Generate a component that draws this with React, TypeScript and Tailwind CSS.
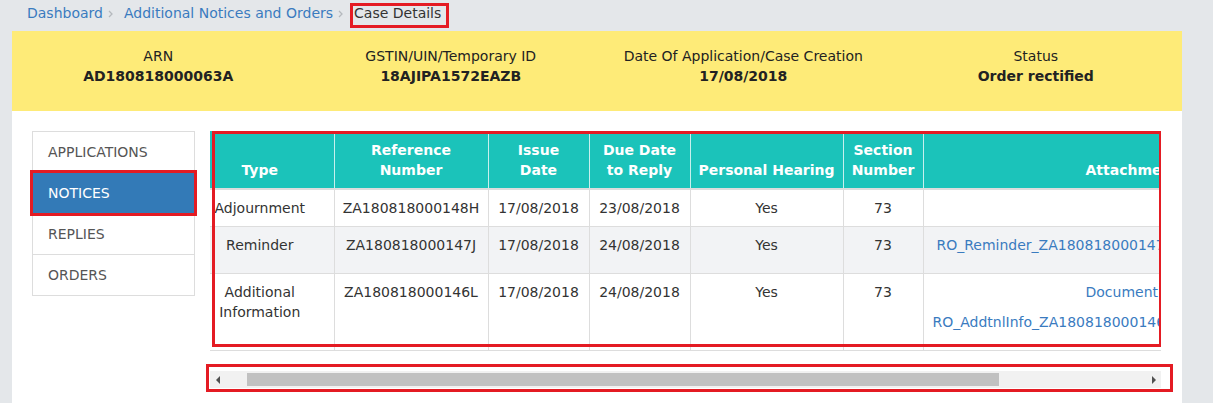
const rows = [
  { type: ["Adjournment"], ref: "ZA180818000148H", issue: "17/08/2018", due: "23/08/2018", hearing: "Yes", section: "73", files: [] as { label: string; pl: string }[] },
  {
    type: ["Reminder"],
    ref: "ZA180818000147J",
    issue: "17/08/2018",
    due: "24/08/2018",
    hearing: "Yes",
    section: "73",
    files: [{ label: "RO_Reminder_ZA180818000147J.pdf", pl: "pl-[13px]" }],
  },
  {
    type: ["Additional", "Information"],
    ref: "ZA180818000146L",
    issue: "17/08/2018",
    due: "24/08/2018",
    hearing: "Yes",
    section: "73",
    files: [
      { label: "Document", pl: "pl-[162px]" },
      { label: "RO_AddtnlInfo_ZA180818000146L.pdf", pl: "pl-[9px]" },
    ],
  },
]

const menu = ["APPLICATIONS", "NOTICES", "REPLIES", "ORDERS"]

function Crumb({ label }: { label: string }) {
  return (
    <>
      <a className="text-[#3a7bbf]">{label}</a>
      <svg width="6" height="8" viewBox="0 0 6 8" className="ml-[5px] mr-[10px] mt-[7px]">
        <path d="M1 1l3 3-3 3" fill="none" stroke="#b5b9bd" strokeWidth="1.3" />
      </svg>
    </>
  )
}

export default function App() {
  return (
    <div className="min-h-[403px] bg-[#e4e7ea] font-['DejaVu_Sans',sans-serif] text-[14px] leading-[20px] text-[#333]">
      <div className="flex h-[31px] items-start pl-[27px] pt-[3px]">
        <Crumb label="Dashboard" />
        <Crumb label="Additional Notices and Orders" />
        <span className="relative text-[#333]">
          Case Details
          <span className="absolute -left-[4px] -right-[8px] top-0 -bottom-[5px] border-[3px] border-[#e41b23]" />
        </span>
      </div>

      <div className="ml-[12px] min-h-[372px] w-[1170px] bg-white">
        <div className="grid h-[80px] grid-cols-4 bg-[#feeb78] pt-[15px] text-center text-[#222]">
          <div>
            <div>ARN</div>
            <div className="font-bold">AD180818000063A</div>
          </div>
          <div>
            <div>GSTIN/UIN/Temporary ID</div>
            <div className="font-bold">18AJIPA1572EAZB</div>
          </div>
          <div>
            <div>Date Of Application/Case Creation</div>
            <div className="font-bold">17/08/2018</div>
          </div>
          <div>
            <div>Status</div>
            <div className="font-bold">Order rectified</div>
          </div>
        </div>

        <div className="flex gap-[15px] pl-[20px] pt-[20px]">
          <ul className="h-fit w-[163px] border-x border-t border-[#ddd]">
            {menu.map((m) => (
              <li
                key={m}
                className={
                  m === "NOTICES"
                    ? "relative border-b border-[#ddd] bg-[#337ab7] px-[15px] py-[10px] text-white"
                    : "border-b border-[#ddd] px-[15px] py-[10px] text-[#555]"
                }
              >
                {m}
                {m === "NOTICES" && <span className="absolute -inset-[3px] border-[3px] border-[#e41b23]" />}
              </li>
            ))}
          </ul>

          <div className="w-[951px]">
            <div className="relative overflow-hidden">
              <table className="w-[1240px] table-fixed border-collapse">
                <colgroup>
                  <col className="w-[124px]" />
                  <col className="w-[154px]" />
                  <col className="w-[101px]" />
                  <col className="w-[101px]" />
                  <col className="w-[153px]" />
                  <col className="w-[80px]" />
                  <col className="w-[527px]" />
                </colgroup>
                <thead>
                  <tr className="border-b-2 border-[#ddd] bg-[#1bc3ba] align-bottom font-bold text-white">
                    <th className="pl-[4px] pr-[28px] pb-[8px] pt-[9px]">Type</th>
                    <th className="border-l border-[#c8f0ed] px-[8px] pb-[8px] pt-[9px]">
                      Reference
                      <br />
                      Number
                    </th>
                    <th className="border-l border-[#c8f0ed] px-[8px] pb-[8px] pt-[9px]">
                      Issue
                      <br />
                      Date
                    </th>
                    <th className="border-l border-[#c8f0ed] px-[8px] pb-[8px] pt-[9px]">
                      Due Date
                      <br />
                      to Reply
                    </th>
                    <th className="whitespace-nowrap border-l border-[#c8f0ed] px-[4px] pb-[8px] pt-[9px]">Personal Hearing</th>
                    <th className="border-l border-[#c8f0ed] px-[4px] pb-[8px] pt-[9px]">
                      Section
                      <br />
                      Number
                    </th>
                    <th className="border-l border-[#c8f0ed] pb-[8px] pl-[162px] pt-[9px] text-left">Attachments</th>
                  </tr>
                </thead>
                <tbody>
                  {rows.map((r, i) => (
                    <tr key={r.ref} className={i === 1 ? "border-b border-[#ddd] bg-[#f2f3f5] align-top" : "border-b border-[#ddd] align-top"}>
                      <td className="pb-[8px] pl-[4px] pr-[28px] pt-[8px] text-center">
                        {r.type.map((t) => (
                          <div key={t}>{t}</div>
                        ))}
                      </td>
                      <td className="border-l border-[#ddd] pb-[8px] pt-[8px] text-center">{r.ref}</td>
                      <td className="border-l border-[#ddd] pb-[8px] pt-[8px] text-center">{r.issue}</td>
                      <td className="border-l border-[#ddd] pb-[8px] pt-[8px] text-center">{r.due}</td>
                      <td className="border-l border-[#ddd] pb-[8px] pt-[8px] text-center">{r.hearing}</td>
                      <td className="border-l border-[#ddd] pb-[8px] pt-[8px] text-center">{r.section}</td>
                      <td className="whitespace-nowrap border-l border-[#ddd] pb-[8px] pt-[8px]">
                        {r.files.map((f) => (
                          <div key={f.label} className={`mb-[10px] ${f.pl}`}>
                            <a className="text-[#3a7bbf]">{f.label}</a>
                          </div>
                        ))}
                      </td>
                    </tr>
                  ))}
                </tbody>
              </table>
              <span className="absolute bottom-[4px] left-[2px] -right-[1px] top-0 border-[3px] border-[#e41b23]" />
            </div>

            <div className="relative mt-[20px] flex h-[17px] items-center bg-[#f1f1f1]">
              <svg width="4" height="8" viewBox="0 0 4 8" className="ml-[6px]">
                <path d="M4 0v8L0 4z" fill="#505050" />
              </svg>
              <div className="ml-[27px] h-[13px] w-[752px] bg-[#c1c1c1]" />
              <svg width="4" height="8" viewBox="0 0 4 8" className="ml-auto mr-[5px]">
                <path d="M0 0v8l4-4z" fill="#505050" />
              </svg>
              <span className="absolute -bottom-[4px] -left-[4px] -right-[12px] -top-[7px] border-[3px] border-[#e41b23]" />
            </div>
          </div>
        </div>
      </div>
    </div>
  )
}
